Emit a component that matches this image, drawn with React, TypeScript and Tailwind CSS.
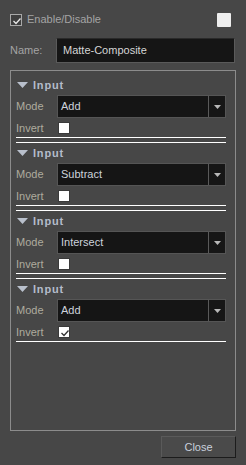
import { Fragment } from 'react';

const font = { fontFamily: '"Liberation Sans", Arial, sans-serif' };

function Check({ color = '#e8e8e8' }: { color?: string }) {
  return (
    <svg width="12" height="12" viewBox="0 0 12 12" className="block">
      <polyline points="2.5,6 5,8.5 9.5,3.5" fill="none" stroke={color} strokeWidth="1.3" />
    </svg>
  );
}

function Combo({ value }: { value: string }) {
  return (
    <div className="flex h-[23px] flex-1 border border-[#555555] bg-[#151515]">
      <div className="flex flex-1 items-center pl-[3px] text-[11px] text-[#cdd3dc]">{value}</div>
      <div className="flex w-[17px] items-center justify-center border-l border-[#5a5a5a] bg-[#161616]">
        <svg width="7" height="4" viewBox="0 0 7 4">
          <polygon points="0,0 7,0 3.5,4" fill="#b8b8b8" />
        </svg>
      </div>
    </div>
  );
}

export default function App() {
  const inputs = [
    { mode: 'Add', invert: false },
    { mode: 'Subtract', invert: false },
    { mode: 'Intersect', invert: false },
    { mode: 'Add', invert: true },
  ];

  return (
    <div className="flex h-[465px] w-[246px] flex-col bg-[#474747]" style={font}>
      {/* enable row */}
      <div className="mt-[12px] flex h-[15px] items-center justify-between pl-[10px] pr-[15px]">
        <div className="flex items-center gap-[5px]">
          <div className="h-[12px] w-[12px] border border-[#a8a8a8] bg-[#3e3e3e]">
            <Check />
          </div>
          <span className="text-[11px] text-[#a4a4a4]">Enable/Disable</span>
        </div>
        <div className="h-[14px] w-[14px] rounded-[1px] bg-[#eeeeee]" />
      </div>

      {/* name row */}
      <div className="mt-[11px] flex h-[25px] items-center pl-[10px]">
        <span className="w-[46px] text-[11px] text-[#a4a4a4]">Name:</span>
        <div className="flex h-[25px] w-[179px] items-center border border-[#5a5a5a] border-t-[#2a2a2a] bg-[#151515] pl-[6px] text-[11px] text-[#d6d6d6]">
          Matte-Composite
        </div>
      </div>

      {/* group box */}
      <div className="ml-[10px] mt-[7px] h-[361px] w-[226px] border border-[#8c8c8c] pl-[5px] pr-[9px] pt-[4px]">
        {inputs.map((inp, i) => (
          <Fragment key={i}>
            <div className="flex h-[20px] items-center gap-[5px]">
              <svg width="11" height="6" viewBox="0 0 11 6" className="ml-[1px]">
                <polygon points="0,0 11,0 5.5,6" fill="#b9c0cc" />
              </svg>
              <span className="text-[11px] font-bold tracking-[0.8px] text-[#b4bccb]">Input</span>
            </div>
            <div className="flex items-center">
              <span className="w-[41px] text-[11px] text-[#aeab9e]">Mode</span>
              <Combo value={inp.mode} />
            </div>
            <div className="mt-[4px] flex h-[12px] items-center">
              <span className="w-[42px] text-[11px] text-[#aeab9e]">Invert</span>
              <div className="h-[12px] w-[12px] border border-[#3a3a3a] bg-white">
                {inp.invert && <Check color="#333333" />}
              </div>
            </div>
            <div className="mt-[3px] h-px bg-white" />
            {i < inputs.length - 1 && <div className="mt-[4px] h-px bg-white" />}
          </Fragment>
        ))}
      </div>

      {/* close */}
      <div className="mt-[5px] flex justify-end pr-[10px]">
        <button className="flex h-[22px] w-[75px] items-center justify-center border border-[#5a5a5a] border-b-[#1c1c1c] border-r-[#1c1c1c] bg-[#4a4a4a] text-[11px] text-[#c9d0dc]">
          Close
        </button>
      </div>
    </div>
  );
}
